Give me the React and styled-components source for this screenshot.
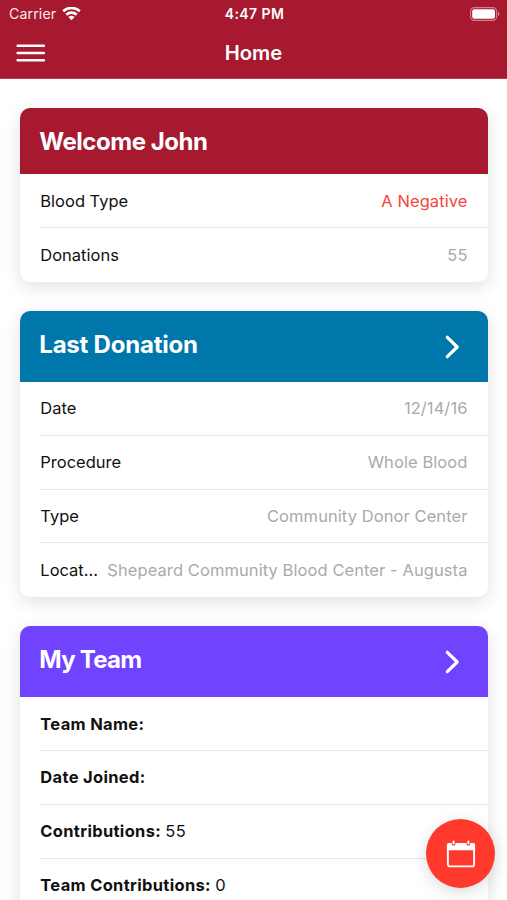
import styled, { createGlobalStyle } from "styled-components";

const GlobalStyle = createGlobalStyle`
	* {
		box-sizing: border-box;
	}

	html, body {
		margin: 0;
		height: 100%;
		overflow: hidden;
		background: #fff;
	}
`;

const Screen = styled.div`
	position: relative;
	width: 507px;
	height: 900px;
	overflow: hidden;

	display: flex;
	flex-direction: column;
	background: #fff;
	color: #111;
	font-family: "Inter", "Liberation Sans", sans-serif;
	font-size: 16.5px;
`;

const Header = styled.header`
	flex: none;
	height: 79px;
	background: #a6192e;
	color: #fff;
	border-bottom: 1px solid #b23a4c;
`;

const StatusBar = styled.div`
	height: 27px;
	padding: 0 7px 0 9px;

	display: grid;
	grid-template-columns: 1fr auto 1fr;
	align-items: center;
	font-size: 14.2px;
`;

const Carrier = styled.div`
	display: flex;
	align-items: center;
	gap: 5.5px;
	color: #fbe9eb;
	letter-spacing: 0.1px;
`;

const Clock = styled.div`
	font-size: 14px;
	font-weight: 600;
	letter-spacing: 0.4px;
`;

const Battery = styled.div`
	display: flex;
	justify-content: flex-end;
`;

const NavBar = styled.div`
	height: 51px;
	padding: 0 16px;

	display: grid;
	grid-template-columns: 1fr auto 1fr;
	align-items: center;
`;

const MenuButton = styled.button`
	width: 29px;
	padding: 0;
	border: 0;
	background: none;
`;

const MenuSvg = styled.svg`
	display: block;
	width: 29px;
	height: 18px;
`;

const PageTitle = styled.h1`
	margin: 0 0 1px;
	font-size: 20.2px;
	font-weight: 600;
`;

const Content = styled.main`
	padding: 29.3px 19.5px 0 20.3px;

	display: flex;
	flex-direction: column;
	gap: 29.2px;
`;

const CardBox = styled.section`
	flex: none;
	border-radius: 10px;
	background: #fff;
	box-shadow: 0 5px 18px rgba(0, 0, 0, 0.12);
	overflow: hidden;
`;

const CardHeader = styled.div`
	height: ${({ $link }) => ($link ? 71 : 66)}px;
	padding: 0 27.7px ${({ $link }) => ($link ? 4 : 0)}px 19px;

	display: flex;
	align-items: center;
	justify-content: space-between;
	background: ${({ $color }) => $color};
	color: #fff;
`;

const CardTitle = styled.h2`
	margin: 0;
	font-size: 24px;
	font-weight: 700;
	letter-spacing: ${({ $spacing }) => $spacing || 0}px;
`;

const Chevron = styled.svg`
	width: 16px;
	height: 26px;
	margin-top: 4px;
`;

const Row = styled.div`
	height: 53.77px;
	margin-left: 20px;
	padding-right: 20px;

	display: flex;
	align-items: center;
	justify-content: space-between;
	white-space: nowrap;

	&:not(:last-child) {
		border-bottom: 1px solid #e9e9eb;
	}
`;

const Label = styled.span`
	font-weight: ${({ $bold }) => ($bold ? 700 : 400)};
	letter-spacing: ${({ $bold }) => ($bold ? 0.32 : 0)}px;
`;

const Value = styled.span`
	color: ${({ $color }) => $color || "#aaa"};
	letter-spacing: 0.08px;
`;

const TeamValue = styled.span`
	font-weight: 400;
`;

const Fab = styled.button`
	position: absolute;
	right: 12px;
	bottom: 12px;
	width: 69px;
	height: 69px;
	padding: 0;
	border: 0;
	border-radius: 50%;

	display: flex;
	align-items: center;
	justify-content: center;
	background: #ff392b;
	box-shadow: 0 4px 16px rgba(0, 0, 0, 0.14);
`;

const donationRows = [
	["Date", "12/14/16"],
	["Procedure", "Whole Blood"],
	["Type", "Community Donor Center"],
	["Locat...", "Shepeard Community Blood Center - Augusta"],
];

const teamRows = [
	["Team Name:", ""],
	["Date Joined:", ""],
	["Contributions:", "55"],
	["Team Contributions:", "0"],
];

function MenuIcon() {
	return (
		<MenuSvg viewBox="0 0 29 18" stroke="#fff" strokeWidth="2.4" strokeLinecap="round">
			<path d="M1.6 1.7H28M1.6 9H28M1.6 16.3H28" />
		</MenuSvg>
	);
}

function WifiIcon() {
	return (
		<svg width="19" height="14" viewBox="0 0 19 14" fill="none" stroke="#fff" strokeWidth="2.6">
			<path d="M1.2 4.2C5.8 -.2 13.2 -.2 17.8 4.2" />
			<path d="M4.3 7.7C7.2 4.9 11.8 4.9 14.7 7.7" />
			<path d="M9.5 13.2 6.4 10.1C8.1 8.4 10.9 8.4 12.6 10.1Z" fill="#fff" stroke="none" />
		</svg>
	);
}

function BatteryIcon() {
	return (
		<svg width="30" height="14" viewBox="0 0 30 14">
			<rect x=".6" y=".6" width="26" height="12.8" rx="3.6" fill="none" stroke="#d0818c" strokeWidth="1.1" />
			<rect x="2.2" y="2.2" width="22.8" height="9.6" rx="2" fill="#fff" />
			<path d="M28 4.8C29.9 5.5 29.9 8.5 28 9.2Z" fill="#d0818c" />
		</svg>
	);
}

function CalendarIcon() {
	return (
		<svg width="30" height="28" viewBox="0 0 30 28">
			<rect x="1.9" y="4" width="26.2" height="22.4" rx="2" fill="none" stroke="#fff" strokeWidth="1.9" />
			<path d="M.9 5.1Q.9 3 3 3H27Q29.1 3 29.1 5.1V10.3H.9Z" fill="#fff" />
			<path d="M7.6 1.6V3.8M22.4 1.6V3.8" stroke="#ff392b" strokeWidth="3.8" strokeLinecap="round" />
			<path d="M7.6 1.5V3.6M22.4 1.5V3.6" stroke="#fff" strokeWidth="2" strokeLinecap="round" />
		</svg>
	);
}

function Card({ title, color, link, spacing, children }) {
	return (
		<CardBox>
			<CardHeader $color={color} $link={link}>
				<CardTitle $spacing={spacing}>{title}</CardTitle>
				{link && (
					<Chevron viewBox="0 0 16 26" fill="none" stroke="#fff" strokeWidth="3.2" strokeLinecap="round" strokeLinejoin="round">
						<path d="M3.3 3.3 13.2 13 3.3 22.7" />
					</Chevron>
				)}
			</CardHeader>
			{children}
		</CardBox>
	);
}

export default function App() {
	return (
		<Screen>
			<GlobalStyle />
			<Header>
				<StatusBar>
					<Carrier>Carrier <WifiIcon /></Carrier>
					<Clock>4:47 PM</Clock>
					<Battery><BatteryIcon /></Battery>
				</StatusBar>
				<NavBar>
					<MenuButton aria-label="Menu">
						<MenuIcon />
					</MenuButton>
					<PageTitle>Home</PageTitle>
				</NavBar>
			</Header>
			<Content>
				<Card title="Welcome John" color="#a6192e" spacing={-0.48}>
					<Row>
						<Label>Blood Type</Label>
						<Value $color="#f8443b">A Negative</Value>
					</Row>
					<Row>
						<Label>Donations</Label>
						<Value>55</Value>
					</Row>
				</Card>
				<Card title="Last Donation" color="#0077ab" spacing={-0.22} link>
					{donationRows.map(([label, value]) => (
						<Row key={label}>
							<Label>{label}</Label>
							<Value>{value}</Value>
						</Row>
					))}
				</Card>
				<Card title="My Team" color="#7043ff" spacing={-0.75} link>
					{teamRows.map(([label, value]) => (
						<Row key={label}>
							<Label $bold>
								{label} <TeamValue>{value}</TeamValue>
							</Label>
						</Row>
					))}
				</Card>
			</Content>
			<Fab aria-label="Schedule">
				<CalendarIcon />
			</Fab>
		</Screen>
	);
}
